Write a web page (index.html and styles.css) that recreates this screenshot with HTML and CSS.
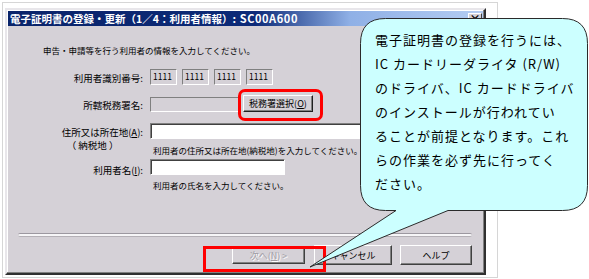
FILE: index.html
```html
<!DOCTYPE html>
<html lang="ja">
<head>
    <meta charset="UTF-8">
    <title>電子証明書の登録・更新</title>
    <link rel="stylesheet" href="styles.css">
</head>
<body>

<div class="frame">
    <div class="window">
        <div class="titlebar">
            <span class="title">電子証明書の登録・更新（1／4：利用者情報）<span class="code">: SC00A600</span></span>
            <span class="close">×</span>
        </div>
        <div class="client">
            <p class="lead">申告・申請等を行う利用者の情報を入力してください。</p>

            <div class="row row-id">
                <div class="label">利用者識別番号:</div>
                <div class="field ids">
                    <span class="box">1111</span>
                    <span class="box">1111</span>
                    <span class="box">1111</span>
                    <span class="box">1111</span>
                </div>
            </div>

            <div class="row row-office">
                <div class="label">所轄税務署名:</div>
                <div class="field">
                    <span class="input grey office"></span>
                    <span class="btn pick">税務署選択(<u>O</u>)</span>
                </div>
            </div>

            <div class="row row-addr">
                <div class="label">
                    <span class="label-two">
                        <span>住所又は所在地(<u>A</u>):</span>
                        <span class="sub">（ 納税地 ）</span>
                    </span>
                </div>
                <div class="field stack">
                    <span class="input addr"></span>
                    <span class="hint">利用者の住所又は所在地(納税地)を入力してください。</span>
                </div>
            </div>

            <div class="row row-name">
                <div class="label">利用者名(<u>I</u>):</div>
                <div class="field stack">
                    <span class="input name"></span>
                    <span class="hint">利用者の氏名を入力してください。</span>
                </div>
            </div>

            <div class="sep"></div>

            <div class="buttons">
                <span class="btn next disabled">次へ(<u>N</u>) &gt;</span>
                <span class="btn cancel">キャンセル</span>
                <span class="btn help">ヘルプ</span>
            </div>
        </div>
    </div>
</div>

<!-- 赤枠 -->
<div class="mark mark-office"></div>
<div class="mark mark-next"></div>

<!-- 吹き出し -->
<svg class="balloon" width="589" height="279" viewBox="0 0 589 279">
    <path d="M385.5 18.5 H562.5 Q587.5 18.5 587.5 43.5 V185.5 Q587.5 210.5 562.5 210.5 H448 L310 267 L396 210.5 H385.5 Q360.5 210.5 360.5 185.5 V43.5 Q360.5 18.5 385.5 18.5 Z"
          fill="#ccffff" stroke="#2a2a2a" stroke-width="1"/>
</svg>
<div class="balloon-text">
    電子証明書の登録を行うには、<br>
    IC カードリーダライタ (R/W)<br>
    のドライバ、IC カードドライバ<br>
    のインストールが行われてい<br>
    ることが前提となります。これ<br>
    らの作業を必ず先に行ってく<br>
    ださい。
</div>

</body>
</html>
```

FILE: styles.css
```css
body {
    margin: 0;
    padding: 2px;
    background-color: #fff;
    font-family: "Noto Sans CJK JP", sans-serif;
    color: #000;
}
u {
    text-decoration: underline;
}
.frame {
    width: 492px;
    height: 269px;
    border: 1px solid #d6d6d6;
    padding: 5px 0 0 2px;
}
.window {
    box-sizing: border-box;
    width: 481px;
    height: 267px;
    background-color: #d5d1d7;
    border: 2px solid;
    border-color: #e8e6ea #303030 #303030 #e8e6ea;
    box-shadow: inset -1px -1px #808080, inset 1px 1px #fff;
    padding: 1px;
    overflow: hidden;
}
.titlebar {
    height: 15px;
    display: flex;
    align-items: center;
    background: linear-gradient(90deg, #0a246a 0%, #0c2a78 52%, #8fb0e6 72%, #b4cdf2 100%);
}
.title {
    color: #fff;
    font-weight: bold;
    font-size: 10.5px;
    line-height: 15px;
    padding-left: 2px;
    white-space: nowrap;
}
.code {
    font-size: 11px;
    letter-spacing: 0.6px;
}
.close {
    margin-left: auto;
    margin-right: 1px;
    width: 14px;
    height: 11px;
    box-sizing: border-box;
    background-color: #d5d1d7;
    border: 1px solid;
    border-color: #fff #404040 #404040 #fff;
    font-size: 11px;
    line-height: 8px;
    font-weight: bold;
    text-align: center;
}

.client {
    font-size: 9.5px;
}
.lead {
    margin: 18px 0 0 35px;
    font-size: 8.5px;
    line-height: 12px;
    white-space: nowrap;
}
.row {
    display: grid;
    grid-template-columns: 135px 1fr;
    column-gap: 7px;
}
.label {
    text-align: right;
    line-height: 12px;
    white-space: nowrap;
}
.field {
    display: flex;
    align-items: center;
}
.stack {
    flex-direction: column;
    align-items: flex-start;
}

.row-id {
    margin-top: 13px;
    height: 16px;
    align-items: center;
}
.row-id .label {
    padding-top: 2px;
}
.ids {
    gap: 5px;
}
.box {
    box-sizing: border-box;
    width: 27px;
    height: 16px;
    border: 1px solid;
    border-color: #808080 #fff #fff #808080;
    font-size: 8.5px;
    line-height: 13px;
    padding-left: 2px;
}

.row-office {
    margin-top: 9px;
    height: 18px;
    align-items: center;
}
.row-office .label {
    padding-top: 4px;
}

.input {
    box-sizing: border-box;
    display: block;
    height: 16px;
    border: 1px solid;
    border-color: #808080 #fff #fff #808080;
    box-shadow: inset 1px 1px #404040;
    background-color: #fff;
}
.input.grey {
    background-color: #d5d1d7;
    box-shadow: none;
}
.office {
    width: 91px;
    height: 15px;
    margin-top: 3px;
}
.addr {
    width: 320px;
}
.name {
    width: 135px;
}

.btn {
    box-sizing: border-box;
    display: flex;
    align-items: center;
    justify-content: center;
    background-color: #d5d1d7;
    border: 1px solid;
    border-color: #fff #404040 #404040 #fff;
    box-shadow: inset -1px -1px #808080;
    font-size: 9px;
    white-space: nowrap;
}
.pick {
    width: 70px;
    height: 17px;
    margin-left: 2px;
    border-color: #fff #202020 #202020 #fff;
}

.row-addr {
    margin-top: 11px;
}
.row-addr .label {
    padding-top: 3px;
}
.label-two {
    display: inline-flex;
    flex-direction: column;
    text-align: left;
    line-height: 13px;
}
.sub {
    padding-left: 5px;
}
.hint {
    font-size: 8.5px;
    line-height: 12px;
    margin-top: 5px;
    margin-left: 3px;
    white-space: nowrap;
}

.row-name {
    margin-top: 3px;
}
.row-name .label {
    padding-top: 5px;
}
.row-name .hint {
    margin-top: 4px;
}

.sep {
    margin: 42px 0 0 10px;
    width: 454px;
    height: 2px;
    background-color: #f6f5f7;
    border-top: 1px solid #9c98a0;
    border-bottom: 1px solid #b4b0b6;
    border-radius: 2px;
}
.buttons {
    display: flex;
    justify-content: flex-end;
    margin-top: 8px;
    padding-right: 11px;
}
.buttons .btn {
    height: 20px;
}
.next {
    width: 73px;
    margin-right: 9px;
    margin-top: 2px;
    height: 17px !important;
}
.cancel {
    width: 78px;
    margin-right: 8px;
}
.help {
    width: 72px;
}
.disabled {
    color: #a09ca4;
    text-shadow: 1px 1px #fff;
}

.mark {
    position: absolute;
    box-sizing: border-box;
    border: 3px solid #ff0000;
}
.mark-office {
    left: 238px;
    top: 89px;
    width: 85px;
    height: 32px;
    border-radius: 7px;
}
.mark-next {
    left: 203px;
    top: 246px;
    width: 123px;
    height: 26px;
}

.balloon {
    position: absolute;
    left: 0;
    top: 0;
}
.balloon-text {
    position: absolute;
    left: 375px;
    top: 28px;
    font-size: 13px;
    letter-spacing: 1px;
    line-height: 24px;
    white-space: nowrap;
}
```
